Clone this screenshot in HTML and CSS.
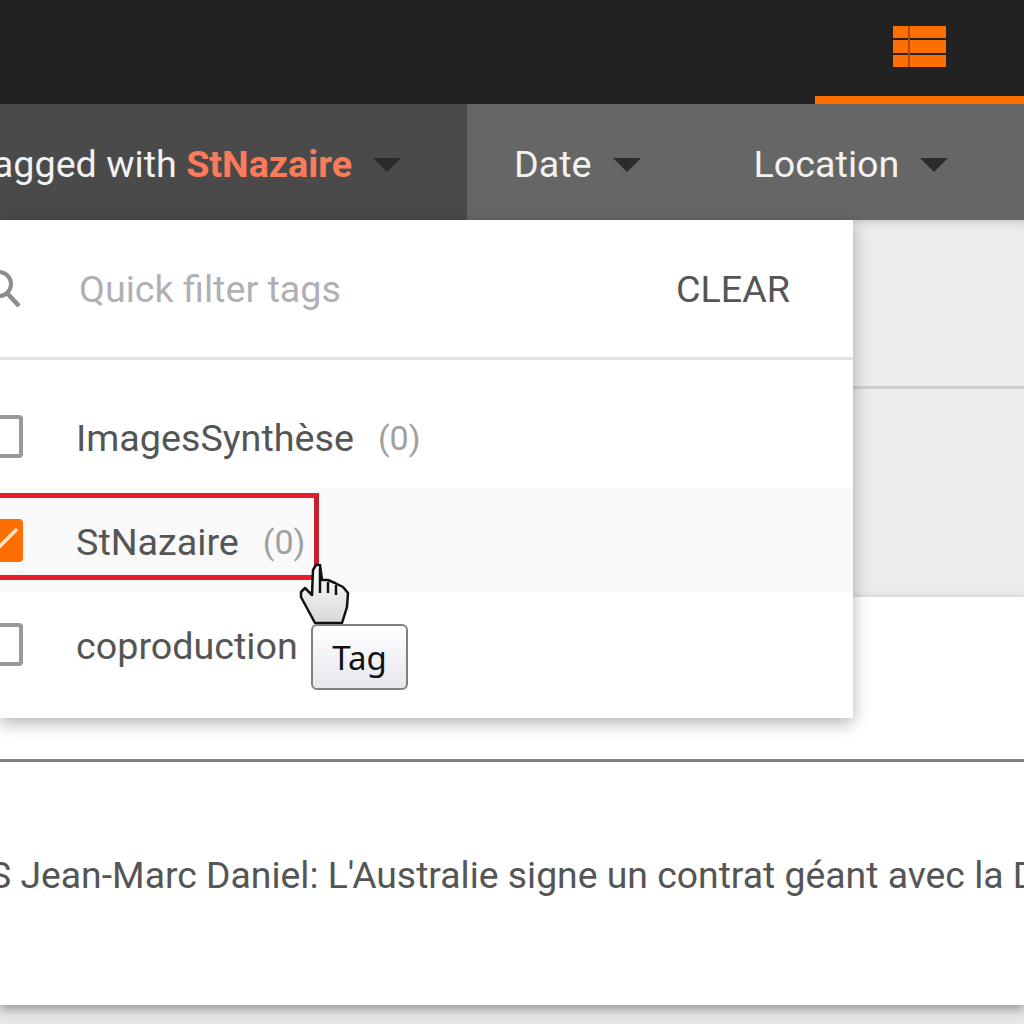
FILE: index.html
```html
<!DOCTYPE html>
<html lang="en">

<head>
  <meta charset="UTF-8">
  <meta name="viewport" content="width=device-width, initial-scale=1.0">
  <title>Tag filter</title>
  <link rel="stylesheet" href="styles.css">
</head>

<body>
  <header class="topbar">
    <div class="view-tab">
      <svg class="view-icon" width="53" height="41" viewBox="0 0 53 41">
        <rect x="0" y="0" width="53" height="12" />
        <rect x="0" y="14" width="53" height="13" />
        <rect x="0" y="29" width="53" height="12" />
        <path class="view-line" d="M16 0 V41" />
      </svg>
    </div>
  </header>

  <nav class="filterbar">
    <div class="filter filter-tags">
      <span class="filter-label">Tagged with <b>StNazaire</b></span>
      <i class="caret"></i>
    </div>
    <div class="filter filter-date">
      <span class="filter-label">Date</span>
      <i class="caret"></i>
    </div>
    <div class="filter filter-location">
      <span class="filter-label">Location</span>
      <i class="caret"></i>
    </div>
  </nav>

  <main class="content">
    <section class="grey-block"></section>
    <section class="white-block">
      <div class="article-top"></div>
      <div class="article">
        <p>S Jean-Marc Daniel: L'Australie signe un contrat géant avec la D</p>
      </div>
    </section>

    <!-- menu ouvert par-dessus le contenu -->
    <div class="dropdown">
      <div class="search">
        <svg class="search-icon" width="38" height="40" viewBox="0 0 38 40">
          <circle cx="15" cy="15" r="12" fill="none" stroke="#8c8c8c" stroke-width="4" />
          <path d="M23 24 L35 37" stroke="#8c8c8c" stroke-width="4.5" fill="none" />
        </svg>
        <span class="search-hint">Quick filter tags</span>
        <span class="clear">CLEAR</span>
      </div>
      <ul class="tags">
        <li class="tag">
          <span class="box"></span>
          <span class="tag-name">ImagesSynthèse</span>
          <span class="tag-count">(0)</span>
        </li>
        <li class="tag tag-on">
          <span class="box box-on">
            <svg width="43" height="43" viewBox="0 0 43 43">
              <path d="M12 20 L20 27 L37 10" fill="none" stroke="#ffe6d2" stroke-width="3.5" />
            </svg>
          </span>
          <span class="tag-name">StNazaire</span>
          <span class="tag-count">(0)</span>
        </li>
        <li class="tag">
          <span class="box"></span>
          <span class="tag-name">coproduction</span>
        </li>
      </ul>
    </div>

    <div class="highlight"></div>

    <svg class="hand" width="52" height="66" viewBox="0 0 52 66">
      <defs>
        <linearGradient id="handfill" x1="0" y1="0" x2="0" y2="1">
          <stop offset="0" stop-color="#ffffff" />
          <stop offset="1" stop-color="#d8d8d8" />
        </linearGradient>
      </defs>
      <path d="M17 61 L3 35 L3 30 L7 26 L14 33 L15 8 L18 3 L22 3 L24 18 L30 18 L37 21 L45 25 L50 31 L49 45 L44 61 Z"
        fill="url(#handfill)" stroke="#111" stroke-width="2.5" stroke-linejoin="round" />
      <path d="M22 6 L22 31 M30 20 L30 31 M38 23 L38 33" stroke="#111" stroke-width="2.5" fill="none" />
    </svg>

    <div class="tooltip">Tag</div>
  </main>
</body>

</html>
```

FILE: styles.css
```css
* {
  padding: 0;
  margin: 0;
  box-sizing: border-box;
}

html,
body {
  width: 1024px;
  height: 1024px;
  overflow: hidden;
}

body {
  background-color: #e6e6e6;
  font-family: Roboto, "Liberation Sans", sans-serif;
  font-size: 37.7px;
  color: #555;
}

.topbar {
  height: 104px;
  display: flex;
  justify-content: flex-end;
  background-color: #222;
}

.view-tab {
  width: 209px;
  display: flex;
  justify-content: center;
  padding-top: 26px;
  border-bottom: 8px solid #ff6f00;
}

.view-icon {
  fill: #ff6f00;
}

.view-line {
  stroke: #a84a00;
  stroke-width: 2;
  fill: none;
}

.filterbar {
  height: 116px;
  display: flex;
  background-color: #666;
  color: #f2f2f2;
}

.filter {
  display: flex;
  align-items: center;
  white-space: nowrap;
}

.filter-label {
  padding-top: 3px;
}

.filter-tags {
  width: 467px;
  justify-content: flex-end;
  padding-right: 66px;
  background-color: #4a4a4a;
}

.filter-date {
  margin-left: 47px;
}

.filter-location {
  margin-left: 113px;
}

.filter-label b {
  color: #ff7a59;
  font-weight: 700;
}

.caret {
  width: 0;
  height: 0;
  margin-left: 21px;
  margin-top: 5px;
  border-left: 14px solid transparent;
  border-right: 14px solid transparent;
  border-top: 14px solid #2b2b2b;
}

.content {
  position: relative;
}

.grey-block {
  height: 377px;
  background-color: #ececec;
  background-image: linear-gradient(#d0d0d0, #d0d0d0);
  background-size: 100% 3px;
  background-position: 0 166px;
  background-repeat: no-repeat;
  box-shadow: inset 0 8px 8px -6px rgba(0, 0, 0, 0.18);
}

.white-block {
  height: 408px;
  background-color: #fff;
  box-shadow: 0 4px 10px rgba(0, 0, 0, 0.35);
}

.article-top {
  height: 165px;
  border-bottom: 3px solid #808080;
}

.article {
  height: 243px;
  padding-top: 89px;
  white-space: nowrap;
  overflow: hidden;
}

.article p {
  margin-left: -11px;
  font-size: 37.35px;
  line-height: 48px;
  color: #555;
}

.dropdown {
  position: absolute;
  left: 0;
  top: 0;
  width: 853px;
  height: 498px;
  background-color: #fff;
  box-shadow: 0 5px 16px rgba(0, 0, 0, 0.3);
}

.search {
  height: 140px;
  display: flex;
  align-items: center;
  border-bottom: 3px solid #e2e2e2;
  padding-right: 63px;
}

.search-icon {
  margin-left: -16px;
  margin-right: 57px;
}

.search-hint {
  flex: 1;
  color: #b0b0b4;
}

.clear {
  color: #555;
}

.tags {
  list-style: none;
  padding-top: 24px;
}

.tag {
  height: 104px;
  display: flex;
  align-items: center;
}

.tag-on {
  background-color: #f9f9f9;
}

.box {
  width: 43px;
  height: 43px;
  margin-left: -20px;
  margin-right: 53px;
  flex-shrink: 0;
  border: 4px solid #999;
  border-radius: 4px;
}

.box-on {
  display: flex;
  background-color: #ff6f00;
  border: 0;
}

.tag-name {
  padding-top: 3px;
}

.tag-count {
  margin-left: 24px;
  padding-top: 3px;
  font-size: 34px;
  color: #a0a0a0;
}

.highlight {
  position: absolute;
  left: -6px;
  top: 273px;
  width: 325px;
  height: 87px;
  border: 5px solid #e81c2c;
  border-right-color: #c9202f;
}

.hand {
  position: absolute;
  left: 298px;
  top: 342px;
}

.tooltip {
  position: absolute;
  left: 311px;
  top: 404px;
  width: 97px;
  height: 66px;
  display: flex;
  align-items: center;
  justify-content: center;
  background: linear-gradient(#fff, #e6e7ee);
  border: 2px solid #808080;
  border-radius: 6px;
  font-family: "Noto Sans", sans-serif;
  font-size: 33px;
  color: #111;
}
```
